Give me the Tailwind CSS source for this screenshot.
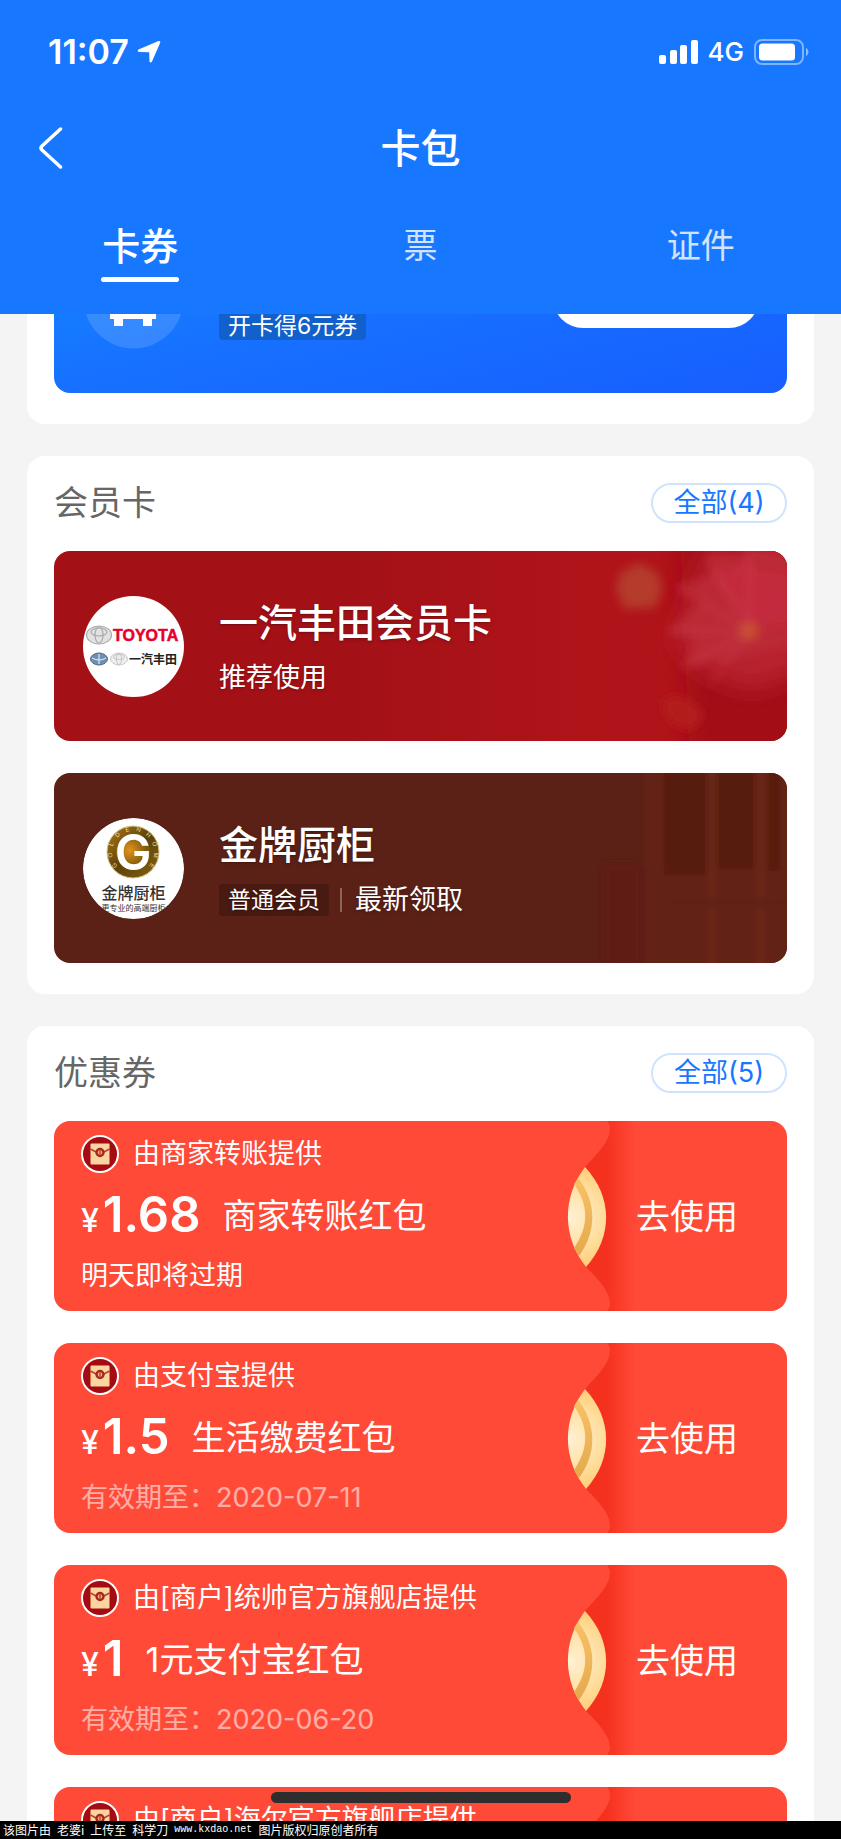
<!DOCTYPE html>
<html lang="zh-CN">
<head>
    <meta charset="UTF-8">
    <meta name="viewport" content="width=device-width, initial-scale=1.0">
    <title>卡包</title>
    <script src="https://cdn.jsdelivr.net/npm/@tailwindcss/browser@4"></script>
</head>
<body class="bg-[#f4f4f4] font-['Inter','Noto_Sans_CJK_SC',sans-serif]">

<!-- Shared drawings -->
<svg class="absolute w-0 h-0" aria-hidden="true">
    <defs>
        <linearGradient id="fold" x1="0" x2="1" y1="0" y2="0">
            <stop offset="0.45" stop-color="#f4301e"/>
            <stop offset="0.72" stop-color="#fa3d2a"/>
            <stop offset="1" stop-color="#ff4a38"/>
        </linearGradient>
        <radialGradient id="coin" gradientUnits="userSpaceOnUse" cx="10" cy="96" r="50">
            <stop offset="0" stop-color="#fff1d3"/>
            <stop offset="0.6" stop-color="#ffe0a4"/>
            <stop offset="1" stop-color="#ffcf7a"/>
        </radialGradient>
        <linearGradient id="coin-ring" x1="0" x2="0" y1="0" y2="1">
            <stop offset="0" stop-color="#f8c166"/>
            <stop offset="1" stop-color="#e5a94d"/>
        </linearGradient>
        <symbol id="packet" viewBox="0 0 38 38">
            <circle cx="19" cy="19" r="18" fill="#a50b12" stroke="#fff" stroke-width="2"/>
            <rect x="9.5" y="8.5" width="19" height="21" rx="1" fill="#fbd5a0"/>
            <path d="M9.5 14L15 17H23L28.500 14" fill="none" stroke="#b8402f" stroke-width="1.600"/>
            <circle cx="19" cy="17.500" r="3.500" fill="#f3b57c" stroke="#a8281f" stroke-width="2.400"/>
            <path d="M19 15.500v4" stroke="#a8281f" stroke-width="1.200"/>
        </symbol>
        <symbol id="tear" viewBox="0 0 76 190">
            <rect x="20" width="56" height="190" fill="url(#fold)"/>
            <path d="M0 0H47Q50 3 50 8C50 20 38 32 25 46C2 72 2 120 26 146C40 160 50 171 50 183Q50 187 47 190H0Z" fill="#ff4a38"/>
            <path d="M25 46C53 76 53 116 26 146C2 116 2 76 25 46Z" fill="url(#coin)"/>
            <path d="M18 57C37 81 37 111 19 135L14 127C29 106 29 84 14 63Z" fill="url(#coin-ring)"/>
        </symbol>
    </defs>
</svg>

<div class="h-screen flex flex-col overflow-hidden relative">

    <!-- Header -->
    <header class="bg-[#1777ff] text-white pb-4 shrink-0">
        <div class="h-[104px] pl-12 pr-8 flex items-center justify-between">
            <div class="flex items-center gap-2">
                <span class="text-[34px] leading-10 font-semibold">11:07</span>
                <svg class="w-6 h-6" viewBox="0 0 24 24" fill="#fff"><path d="M1.500 9.500L21.500 1Q23.600.5 23.200 2.800L15 21.500Q13.600 23.600 12.500 21.500L12.200 12.200L2 12Q-.3 11 1.500 9.500Z"/></svg>
            </div>
            <div class="flex items-center gap-[10px]">
                <svg class="w-[39px] h-6" viewBox="0 0 39 24" fill="#fff">
                    <rect x="0" y="15" width="7" height="9" rx="2"/>
                    <rect x="11" y="10" width="7" height="14" rx="2"/>
                    <rect x="21" y="5" width="7" height="19" rx="2"/>
                    <rect x="32" y="0" width="7" height="24" rx="2"/>
                </svg>
                <span class="text-[26px] leading-8 font-medium">4G</span>
                <svg class="w-[55px] h-[26px]" viewBox="0 0 55 26">
                    <rect x="1" y="1" width="48" height="24" rx="7" fill="none" stroke="#fff" stroke-opacity=".45" stroke-width="2"/>
                    <rect x="5" y="4.500" width="36" height="17" rx="3.500" fill="#fff"/>
                    <path d="M52 8.500Q57 13 52 17.500Z" fill="#fff" fill-opacity=".5"/>
                </svg>
            </div>
        </div>
        <div class="h-[90px] px-9 grid grid-cols-[1fr_auto_1fr] items-center">
            <button type="button" aria-label="返回" class="w-8 h-12 flex items-center">
                <svg class="w-7 h-11" viewBox="0 0 28 44" fill="none" stroke="#fff" stroke-width="3.500" stroke-linecap="round" stroke-linejoin="round"><path d="M24.500 2L6 19Q4 21 6 23L24.500 40"/></svg>
            </button>
            <h1 class="text-[40px] leading-[48px] font-medium">卡包</h1>
        </div>
        <nav class="h-[104px] grid grid-cols-3">
            <button type="button" class="relative text-[38px] leading-[48px] font-medium">卡券
                <span class="absolute bottom-4 left-1/2 -translate-x-1/2 w-[78px] h-[5px] rounded-full bg-white"></span>
            </button>
            <button type="button" class="text-[34px] leading-[48px] text-white/80">票</button>
            <button type="button" class="text-[34px] leading-[48px] text-white/80">证件</button>
        </nav>
    </header>

    <main class="flex-1 min-h-0 overflow-hidden px-[27px]">
        <div class="-mt-[111px] flex flex-col gap-8">

            <!-- Travel card, scrolled under the header -->
            <section class="bg-white rounded-[18px] px-[27px] pb-[31px]">
                <div class="h-[190px] rounded-2xl pl-[29px] pr-7 flex items-center bg-linear-to-br from-[#178aff] via-[#1770ff] to-[#185eff]">
                    <svg class="w-[101px] h-[101px] shrink-0" viewBox="0 0 101 101">
                        <circle cx="50.500" cy="50.500" r="50" fill="#fff" fill-opacity=".14"/>
                        <path d="M27 40L33 26H67L73 40V71H69V78H60V71H40V78H31V71H27Z" fill="#fff"/>
                    </svg>
                    <span class="ml-[35px] self-end mb-[53px] h-8 px-[9px] rounded-sm bg-[#1260cc] text-[23px] leading-[36px] text-white">开卡得6元券</span>
                    <button type="button" aria-label="开卡" class="ml-auto w-[206px] h-[60px] rounded-full bg-white"></button>
                </div>
            </section>

            <!-- Member cards -->
            <section class="bg-white rounded-[18px] px-[27px] pt-[27px] pb-[31px]">
                <div class="flex items-center justify-between mb-7">
                    <h2 class="text-[34px] leading-10 text-[#666]">会员卡</h2>
                    <button type="button" class="w-[136px] h-10 rounded-full border-2 border-[#cfe3ff] text-[27px] leading-9 text-[#1777ff]">全部(4)</button>
                </div>
                <div class="flex flex-col gap-8">
                    <a href="#" class="relative overflow-hidden h-[190px] rounded-2xl pl-[29px] pr-7 flex items-center gap-[35px] text-white bg-linear-to-r from-[#a31116] from-40% to-[#b0141a] to-75%">
                        <svg class="absolute right-0 top-0 w-[227px] h-[190px]" viewBox="0 0 227 190">
                            <filter id="soft" filterUnits="userSpaceOnUse" x="-60" y="-60" width="350" height="320"><feGaussianBlur stdDeviation="5"/></filter>
                            <filter id="softer" filterUnits="userSpaceOnUse" x="-60" y="-60" width="350" height="320"><feGaussianBlur stdDeviation="12"/></filter>
                            <path d="M120 -20H250V220H130Z" fill="#a30c12" filter="url(#softer)"/>
                            <path d="M79 12L98 22L102 38L96 56L64 58L56 38L60 22Z" fill="#b53a2c" filter="url(#soft)"/>
                            <g filter="url(#softer)">
                                <path d="M150 -10H250V120L190 140L140 120L112 90Z" fill="#b8222e"/>
                            </g>
                            <g filter="url(#soft)">
                                <path d="M188 80L146 0L154 24L116 36L142 50L108 80L136 88L124 116L160 110L250 90V10L190 -6L178 12L148 0Z" fill="#bd2b39" fill-opacity=".8"/>
                                <path d="M188 76L152 20L170 22L184 6L200 20L230 24V70Z" fill="#c42a3e"/>
                                <path d="M104 148Q122 138 140 158Q148 170 128 180Q98 170 104 148Z" fill="#b41d1a"/>
                                <circle cx="189" cy="80" r="9" fill="#c8502f"/>
                            </g>
                            <g fill="none" stroke="#d0505a" stroke-opacity=".25" stroke-width="4" filter="url(#soft)">
                                <path d="M189 80L146 6M189 80L116 36M189 80L108 80M189 80L118 118M189 80L190 0M189 80L150 134"/>
                            </g>
                        </svg>
                        <svg class="w-[101px] h-[101px] shrink-0 relative" viewBox="0 0 101 101">
                            <circle cx="50.500" cy="50.500" r="50.500" fill="#fff"/>
                            <g fill="#e2e2e2" stroke="#a9a9a9" stroke-width="1.200">
                                <ellipse cx="16" cy="39" rx="12.500" ry="9"/>
                                <ellipse cx="16" cy="36" rx="8" ry="4" fill="none"/>
                                <ellipse cx="16" cy="39" rx="4" ry="8" fill="none"/>
                            </g>
                            <text x="30" y="45" font-family="Liberation Sans, sans-serif" font-size="16" font-weight="700" fill="#e6002d" stroke="#e6002d" stroke-width=".5">TOYOTA</text>
                            <ellipse cx="16" cy="63" rx="8.500" ry="6" fill="#6d8fb3" stroke="#55697f"/>
                            <path d="M16 58V68M9 62Q16 66 23 62" fill="none" stroke="#d5e2ee" stroke-width="1.300"/>
                            <g fill="#eee" stroke="#bdbdbd" stroke-width=".8">
                                <ellipse cx="36" cy="63" rx="8.500" ry="6"/>
                                <ellipse cx="36" cy="61" rx="5.500" ry="2.500" fill="none"/>
                                <ellipse cx="36" cy="63" rx="2.600" ry="5.500" fill="none"/>
                            </g>
                            <text x="46" y="68" font-family="Noto Sans CJK SC, sans-serif" font-size="12" font-weight="700" fill="#222">一汽丰田</text>
                        </svg>
                        <div class="relative flex flex-col gap-[15px] text-shadow-md">
                            <h3 class="text-[39px] leading-[48px] font-medium">一汽丰田会员卡</h3>
                            <p class="text-[27px] leading-8">推荐使用</p>
                        </div>
                    </a>
                    <a href="#" class="relative overflow-hidden h-[190px] rounded-2xl pl-[29px] pr-7 flex items-center gap-[35px] text-white bg-[#5b2116]">
                        <svg class="absolute right-0 top-0 w-[227px] h-[190px]" viewBox="0 0 227 190">
                            <filter id="grain" filterUnits="userSpaceOnUse" x="-40" y="-40" width="310" height="280"><feGaussianBlur stdDeviation="3"/></filter>
                            <g filter="url(#grain)">
                                <path d="M85 -30H260V220H85Z" fill="#642414"/>
                                <path d="M44 90H82V220H44Z" fill="#5e1d12"/>
                                <path d="M104 -30H146V102H104ZM158 -30H194V96H158ZM208 -30H220V98H208Z" fill="#561d11"/>
                                <path d="M148 -30H156V220H148ZM196 -30H205V220H196Z" fill="#6a2615"/>
                                <path d="M104 125H240V135H104Z" fill="#602213"/>
                            </g>
                        </svg>
                        <svg class="w-[101px] h-[101px] shrink-0 relative rounded-full" viewBox="0 0 101 101">
                            <defs>
                                <linearGradient id="gold-rim" x1="0" x2="1" y1="0" y2="1">
                                    <stop offset="0" stop-color="#b07a18"/>
                                    <stop offset=".5" stop-color="#5b4208"/>
                                    <stop offset="1" stop-color="#8a6510"/>
                                </linearGradient>
                                <radialGradient id="gold-core" cx=".4" cy=".45">
                                    <stop offset="0" stop-color="#e0931c"/>
                                    <stop offset="1" stop-color="#7d5a0c"/>
                                </radialGradient>
                            </defs>
                            <circle cx="50.500" cy="50.500" r="50.500" fill="#fff"/>
                            <circle cx="50" cy="34" r="26" fill="url(#gold-rim)" stroke="#d8c48c"/>
                            <circle cx="50" cy="34" r="17" fill="url(#gold-core)"/>
                            <text x="50" y="52" text-anchor="middle" font-family="Inter, sans-serif" font-size="49" font-weight="600" fill="#fff">G</text>
                            <g font-family="Liberation Sans, sans-serif" font-size="6" text-anchor="middle" fill="#f2dfa8">
                                <text x="50" y="13" transform="rotate(-126 50 34)">G</text>
                                <text x="50" y="13" transform="rotate(-98 50 34)">O</text>
                                <text x="50" y="13" transform="rotate(-70 50 34)">L</text>
                                <text x="50" y="13" transform="rotate(-42 50 34)">D</text>
                                <text x="50" y="13" transform="rotate(-14 50 34)">E</text>
                                <text x="50" y="13" transform="rotate(14 50 34)">N</text>
                                <text x="50" y="13" transform="rotate(42 50 34)">H</text>
                                <text x="50" y="13" transform="rotate(70 50 34)">O</text>
                                <text x="50" y="13" transform="rotate(98 50 34)">M</text>
                                <text x="50" y="13" transform="rotate(126 50 34)">E</text>
                            </g>
                            <g font-family="Noto Sans CJK SC, sans-serif" text-anchor="middle" fill="#333">
                                <text x="50.500" y="81" font-size="16" font-weight="500">金牌厨柜</text>
                                <text x="50.500" y="93" font-size="8">更专业的高端厨柜</text>
                            </g>
                        </svg>
                        <div class="relative flex flex-col gap-[15px] text-shadow-md">
                            <h3 class="text-[39px] leading-[48px] font-medium">金牌厨柜</h3>
                            <div class="flex items-center">
                                <span class="h-8 px-[9px] rounded-sm bg-[#491a12] text-[23px] leading-8">普通会员</span>
                                <span class="ml-[11px] mr-[13px] w-[2px] h-6 bg-white/30"></span>
                                <span class="text-[27px] leading-8">最新领取</span>
                            </div>
                        </div>
                    </a>
                </div>
            </section>

            <!-- Coupons -->
            <section class="bg-white rounded-[18px] px-[27px] pt-[27px] pb-[31px]">
                <div class="flex items-center justify-between mb-7">
                    <h2 class="text-[34px] leading-10 text-[#666]">优惠券</h2>
                    <button type="button" class="w-[136px] h-10 rounded-full border-2 border-[#cfe3ff] text-[27px] leading-9 text-[#1777ff]">全部(5)</button>
                </div>
                <div class="flex flex-col gap-8">
                    <article class="overflow-hidden h-[190px] rounded-2xl bg-[#ff4a38] text-white flex">
                        <div class="flex-1 min-w-0 pl-[27px] pt-[14px] whitespace-nowrap">
                            <div class="flex items-center gap-[14px]">
                                <svg class="w-[38px] h-[38px] shrink-0"><use href="#packet"/></svg>
                                <p class="text-[27px] leading-[38px]">由商家转账提供</p>
                            </div>
                            <div class="mt-3 h-[60px] flex items-center gap-[22px]">
                                <div class="flex items-baseline gap-1">
                                    <span class="text-[32px] font-medium">¥</span>
                                    <strong class="text-[49px] leading-[60px] font-semibold">1.68</strong>
                                </div>
                                <span class="text-[34px]">商家转账红包</span>
                            </div>
                            <p class="mt-3 text-[27px] leading-[38px]">明天即将过期</p>
                        </div>
                        <svg class="w-[76px] h-[190px] shrink-0"><use href="#tear"/></svg>
                        <button type="button" class="w-[151px] shrink-0 text-left text-[34px]">去使用</button>
                    </article>

                    <article class="overflow-hidden h-[190px] rounded-2xl bg-[#ff4a38] text-white flex">
                        <div class="flex-1 min-w-0 pl-[27px] pt-[14px] whitespace-nowrap">
                            <div class="flex items-center gap-[14px]">
                                <svg class="w-[38px] h-[38px] shrink-0"><use href="#packet"/></svg>
                                <p class="text-[27px] leading-[38px]">由支付宝提供</p>
                            </div>
                            <div class="mt-3 h-[60px] flex items-center gap-[22px]">
                                <div class="flex items-baseline gap-1">
                                    <span class="text-[32px] font-medium">¥</span>
                                    <strong class="text-[49px] leading-[60px] font-semibold">1.5</strong>
                                </div>
                                <span class="text-[34px]">生活缴费红包</span>
                            </div>
                            <p class="mt-3 text-[27px] leading-[38px] text-white/55">有效期至：2020-07-11</p>
                        </div>
                        <svg class="w-[76px] h-[190px] shrink-0"><use href="#tear"/></svg>
                        <button type="button" class="w-[151px] shrink-0 text-left text-[34px]">去使用</button>
                    </article>

                    <article class="overflow-hidden h-[190px] rounded-2xl bg-[#ff4a38] text-white flex">
                        <div class="flex-1 min-w-0 pl-[27px] pt-[14px] whitespace-nowrap">
                            <div class="flex items-center gap-[14px]">
                                <svg class="w-[38px] h-[38px] shrink-0"><use href="#packet"/></svg>
                                <p class="text-[27px] leading-[38px]">由[商户]统帅官方旗舰店提供</p>
                            </div>
                            <div class="mt-3 h-[60px] flex items-center gap-[22px]">
                                <div class="flex items-baseline gap-1">
                                    <span class="text-[32px] font-medium">¥</span>
                                    <strong class="text-[49px] leading-[60px] font-semibold">1</strong>
                                </div>
                                <span class="text-[34px]">1元支付宝红包</span>
                            </div>
                            <p class="mt-3 text-[27px] leading-[38px] text-white/55">有效期至：2020-06-20</p>
                        </div>
                        <svg class="w-[76px] h-[190px] shrink-0"><use href="#tear"/></svg>
                        <button type="button" class="w-[151px] shrink-0 text-left text-[34px]">去使用</button>
                    </article>

                    <article class="overflow-hidden h-[190px] rounded-2xl bg-[#ff4a38] text-white flex">
                        <div class="flex-1 min-w-0 pl-[27px] pt-[14px] whitespace-nowrap">
                            <div class="flex items-center gap-[14px]">
                                <svg class="w-[38px] h-[38px] shrink-0"><use href="#packet"/></svg>
                                <p class="text-[27px] leading-[38px]">由[商户]海尔官方旗舰店提供</p>
                            </div>
                        </div>
                        <svg class="w-[76px] h-[190px] shrink-0"><use href="#tear"/></svg>
                        <div class="w-[151px] shrink-0"></div>
                    </article>
                </div>
            </section>
        </div>
    </main>

    <!-- Home indicator -->
    <div class="absolute bottom-9 left-1/2 -translate-x-1/2 w-[300px] h-[11px] rounded-full bg-[#2e2e2e]"></div>

    <footer class="h-[18px] shrink-0 bg-black text-white px-[3px] flex items-center gap-[6px] whitespace-nowrap text-[12px] leading-[18px] font-['Noto_Sans_CJK_SC',sans-serif]">
        <span>该图片由</span>
        <span>老婆i</span>
        <span>上传至</span>
        <span>科学刀</span>
        <span class="text-[10px] font-['Liberation_Mono',monospace]">www.kxdao.net</span>
        <span>图片版权归原创者所有</span>
    </footer>
</div>
</body>
</html>
